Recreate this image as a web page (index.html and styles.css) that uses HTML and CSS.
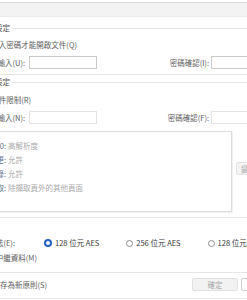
FILE: index.html
```html
<!DOCTYPE html>
<html lang="zh-Hant">
<head>
  <meta charset="UTF-8" />
  <meta name="viewport" content="width=device-width, initial-scale=1.0" />
  <title>密碼安全性 - 設定</title>
  <link rel="stylesheet" href="styles.css">
</head>
<body>
  <div class="titlebar"></div>

  <div class="group first">
    <div class="legend">
      <span class="cut w-legend"><span>文件開啟設定</span></span>
      <span class="rule"></span>
    </div>
    <div class="row r-check">
      <span class="cut w-check"><span>需要輸入密碼才能開啟文件(Q)</span></span>
    </div>
    <div class="row r-pass">
      <span class="cut w-label"><span>文件開啟密碼輸入(U):</span></span>
      <input class="pass" type="password">
      <span class="label-right">密碼確認(I):</span>
      <input class="pass wide" type="password">
    </div>
  </div>

  <div class="group second">
    <div class="legend">
      <span class="cut w-legend"><span>權限設定</span></span>
      <span class="rule"></span>
    </div>
    <div class="row r-check2">
      <span class="cut w-check2"><span>使用密碼限制文件限制(R)</span></span>
    </div>
    <div class="row r-pass dim">
      <span class="cut w-label"><span>變更權限密碼輸入(N):</span></span>
      <input class="pass" type="password" disabled>
      <span class="label-right">密碼確認(F):</span>
      <input class="pass wide" type="password" disabled>
    </div>
    <div class="perm-area">
      <div class="perm-list">
        <div class="perm"><span class="cut w-key key"><span>列印 600:</span></span><span class="val">高解析度</span></div>
        <div class="perm"><span class="cut w-key key"><span>允許變更:</span></span><span class="val">允許</span></div>
        <div class="perm"><span class="cut w-key key"><span>文件記錄:</span></span><span class="val">允許</span></div>
        <div class="perm"><span class="cut w-key key"><span>頁面擷取:</span></span><span class="val">除擷取頁外的其他頁面</span></div>
      </div>
      <button class="side-btn" disabled>變更設定(H)...</button>
    </div>
  </div>

  <div class="group third">
    <div class="row r-enc">
      <span class="cut w-enc"><span>加密演算法(E):</span></span>
      <label class="radio on"><span class="dot"></span>128 位元 AES</label>
      <label class="radio"><span class="dot"></span>256 位元 AES</label>
      <label class="radio"><span class="dot"></span>128 位元 RC4</label>
    </div>
    <div class="row r-meta">
      <span class="cut w-meta"><span>不加密中繼資料(M)</span></span>
    </div>
  </div>

  <div class="group footer">
    <div class="row r-foot">
      <span class="cut w-save"><span>另存為新原則(S)</span></span>
      <button class="btn ok" disabled>確定</button>
      <button class="btn cancel">取消</button>
    </div>
  </div>
</body>
</html>
```

FILE: styles.css
```css
body {
  font-family: "Noto Sans CJK TC", "Microsoft JhengHei", sans-serif;
  font-size: 7.5px;
  line-height: 10px;
  color: #5e5e5e;
  background: white;
  margin: 0;
  width: 247px;
  height: 300px;
  overflow: hidden;
}

.titlebar {
  margin-top: 2px;
  height: 13px;
  background: #f3f3f3;
  border-top: 1px solid #dadada;
  border-bottom: 1px solid #ebebeb;
}

.group {
  border-bottom: 1px solid #e6e6e6;
  padding-bottom: 5px;
}

.row {
  display: flex;
  align-items: center;
  white-space: nowrap;
  height: 10px;
}

/* text that starts left of the visible area */
.cut {
  display: flex;
  justify-content: flex-end;
  overflow: hidden;
  flex-shrink: 0;
}
.cut > span { flex-shrink: 0; white-space: nowrap; }

.legend {
  display: flex;
  height: 10px;
  color: #4e4e4e;
}
.first .legend { margin-top: 6px; }
.second .legend { margin-top: 2px; }

.rule {
  flex: 1;
  height: 1px;
  background: #e6e6e6;
  margin: 5px 0 0 2px;
}

.w-legend { width: 10px; }
.w-check { width: 77px; }
.w-check2 { width: 31px; }
.w-label { width: 25px; }
.w-key { width: 6px; }
.w-enc { width: 15px; }
.w-meta { width: 37px; }
.w-save { width: 47px; }

.r-check { margin-top: 7px; }
.r-check2 { margin-top: 8px; }
.r-pass { margin-top: 6px; height: 13px; }

.pass {
  box-sizing: border-box;
  width: 68px;
  height: 13px;
  margin: 0 0 0 4px;
  padding: 0;
  border: 1px solid #c9c9c9;
  background: white;
  flex-shrink: 0;
}
.pass.wide { width: 60px; margin-left: 2px; }
.dim .pass { border-color: #e3e3e3; }

.label-right {
  width: 112px;
  text-align: right;
  flex-shrink: 0;
}

.perm-area {
  display: flex;
  margin-top: 7px;
}

.perm-list {
  box-sizing: border-box;
  margin-left: -10px;
  width: 242px;
  height: 81px;
  padding: 7px 0 0 9px;
  border: 1px solid #dcdcdc;
  box-shadow: 1px 1px 0 #f1f1f1;
  flex-shrink: 0;
}

.perm {
  display: flex;
  align-items: center;
  height: 14px;
  white-space: nowrap;
}
.key { color: #5a6c8a; }
.val { color: #a9a9a9; margin-left: 2px; }

.side-btn {
  box-sizing: border-box;
  width: 60px;
  height: 13px;
  margin: 31px 0 0 4px;
  padding: 0 0 0 4px;
  border: 1px solid #e3e3e3;
  border-radius: 2px;
  background: #f4f4f4;
  color: #a5a5a5;
  font: inherit;
  text-align: left;
  flex-shrink: 0;
}

.third { padding-bottom: 9px; }

.r-enc { margin-top: 20px; }
.r-meta { margin-top: 5px; }

.radio {
  display: flex;
  align-items: center;
  gap: 3px;
  flex-shrink: 0;
  color: #383838;
  margin-left: 27px;
}
.r-enc .cut + .radio { margin-left: 29px; }

.dot {
  box-sizing: border-box;
  width: 7px;
  height: 7px;
  border: 1px solid #8e8e8e;
  border-radius: 50%;
  background: white;
}
.radio.on .dot { width: 8px; height: 8px; border: 2px solid #2461c2; }

.footer { padding-bottom: 7px; }
.r-foot { margin-top: 5px; height: 13px; }

.btn {
  box-sizing: border-box;
  width: 46px;
  height: 13px;
  padding: 0;
  border: 1px solid #e1e1e1;
  border-radius: 2px;
  background: #f2f2f2;
  color: #a8a8a8;
  font: inherit;
  flex-shrink: 0;
}
.btn.ok { margin-left: 145px; }
.btn.cancel { margin-left: 3px; background: white; border-color: #cfcfcf; color: #555; }
```
